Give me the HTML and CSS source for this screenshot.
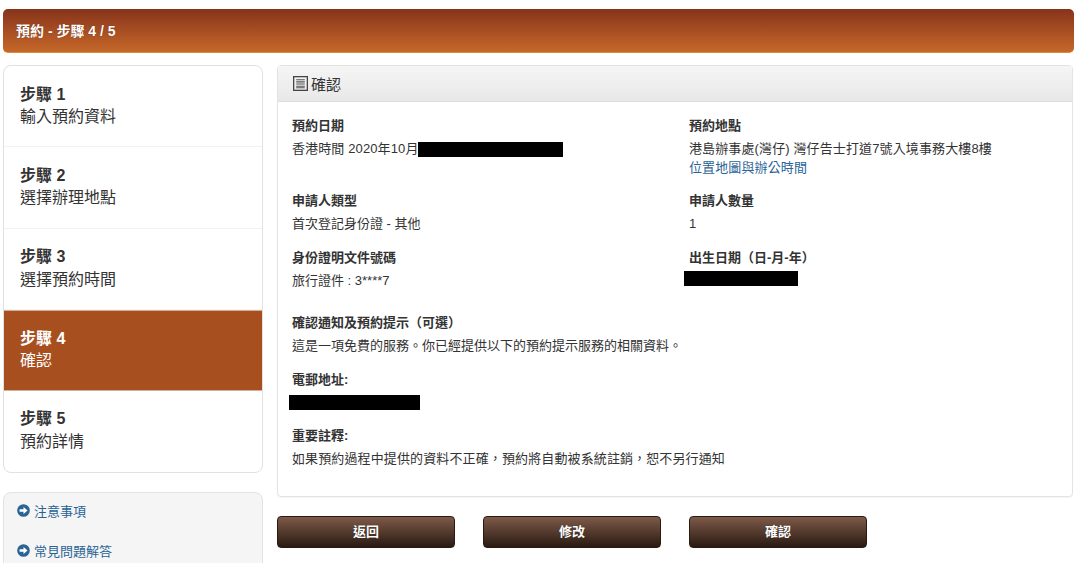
FILE: index.html
```html
<!DOCTYPE html>
<html lang="zh-Hant">
<head>
<meta charset="utf-8">
<title>預約 - 步驟 4 / 5</title>
<link rel="stylesheet" href="styles.css">
</head>
<body>
<header class="title-bar">預約 - 步驟 4 / 5</header>
<div class="layout">
  <aside class="side">
    <ol class="steps">
      <li class="step"><b>步驟 1</b><span>輸入預約資料</span></li>
      <li class="step"><b>步驟 2</b><span>選擇辦理地點</span></li>
      <li class="step"><b>步驟 3</b><span>選擇預約時間</span></li>
      <li class="step active"><b>步驟 4</b><span>確認</span></li>
      <li class="step"><b>步驟 5</b><span>預約詳情</span></li>
    </ol>
    <nav class="links">
      <a class="help-link" href="#"><svg class="arrow" viewBox="0 0 14 14"><circle cx="7" cy="7" r="6.8" fill="#2a6496"/><path d="M2.8 5.6h4.2V3.2L11.4 7 7 10.8V8.4H2.8z" fill="#fff"/></svg>注意事項</a>
      <a class="help-link" href="#"><svg class="arrow" viewBox="0 0 14 14"><circle cx="7" cy="7" r="6.8" fill="#2a6496"/><path d="M2.8 5.6h4.2V3.2L11.4 7 7 10.8V8.4H2.8z" fill="#fff"/></svg>常見問題解答</a>
    </nav>
  </aside>
  <main class="content">
    <section class="panel">
      <h2 class="panel-head"><svg class="list-icon" viewBox="0 0 14 14"><rect x=".6" y=".6" width="12.8" height="12.8" fill="none" stroke="#444" stroke-width="1.2"/><path d="M3 3.5h8M3 5.5h8M3 7.5h8M3 9.5h8M3 11h8" stroke="#555" stroke-width="1"/></svg>確認</h2>
      <div class="panel-body">
        <div class="grid">
          <div class="field f1">
            <h3>預約日期</h3>
            <p>香港時間 2020年10月<i class="redact r-date"></i></p>
          </div>
          <div class="field f1">
            <h3>預約地點</h3>
            <p>港島辦事處(灣仔) 灣仔告士打道7號入境事務大樓8樓<a class="map-link" href="#">位置地圖與辦公時間</a></p>
          </div>
          <div class="field f2">
            <h3>申請人類型</h3>
            <p>首次登記身份證 - 其他</p>
          </div>
          <div class="field f2">
            <h3>申請人數量</h3>
            <p>1</p>
          </div>
          <div class="field f3">
            <h3>身份證明文件號碼</h3>
            <p>旅行證件 : 3****7</p>
          </div>
          <div class="field f3">
            <h3>出生日期（日-月-年）</h3>
            <p><i class="redact r-dob"></i></p>
          </div>
        </div>
        <div class="field f4">
          <h3>確認通知及預約提示（可選）</h3>
          <p>這是一項免費的服務。你已經提供以下的預約提示服務的相關資料。</p>
        </div>
        <div class="field f5">
          <h3>電郵地址:</h3>
          <p><i class="redact r-mail"></i></p>
        </div>
        <div class="field f6">
          <h3>重要註釋:</h3>
          <p>如果預約過程中提供的資料不正確，預約將自動被系統註銷，恕不另行通知</p>
        </div>
      </div>
    </section>
    <div class="actions">
      <button class="btn">返回</button>
      <button class="btn">修改</button>
      <button class="btn">確認</button>
    </div>
  </main>
</div>
</body>
</html>
```
FILE: styles.css
```css
* { box-sizing: border-box; }
html, body { margin: 0; height: 563px; overflow: hidden; background: #fff; }
body {
  padding: 9px 6px 0 3px;
  font-family: "Liberation Sans", "Noto Sans CJK TC", sans-serif;
  font-size: 13px;
  color: #333;
}
.title-bar {
  height: 44px;
  padding-left: 13px;
  line-height: 44px;
  font-size: 14px;
  font-weight: bold;
  color: #fff;
  text-shadow: 0 0 1px rgba(60, 20, 0, .6);
  border-radius: 5px;
  border-bottom: 1px solid #d98a3a;
  background: linear-gradient(#86331a, #c7682a);
}
.layout { display: flex; gap: 14px; margin-top: 12px; }
.side { width: 260px; flex: none; }
.steps {
  list-style: none;
  margin: 0;
  padding: 0;
  height: 408px;
  border: 1px solid #e1e1e1;
  border-radius: 8px;
  overflow: hidden;
}
.step {
  height: 81.4px;
  padding: 17.5px 16px 0;
  font-size: 16px;
  line-height: 22.5px;
  border-bottom: 1px solid #f2f2f2;
}
.step:last-child { border-bottom: 0; }
.step b, .step span { display: block; }
.step.active {
  height: 80.4px;
  padding-top: 16.5px;
  background: #a84f20;
  color: #fff;
  border-color: #d3b09c;
  border-top: 1px solid #d3b09c;
}
.links {
  margin-top: 19px;
  height: 120px;
  padding: 7px 13px;
  border: 1px solid #e3e3e3;
  border-radius: 8px;
  background: #f5f5f5;
}
.help-link {
  display: flex;
  align-items: center;
  gap: 4px;
  height: 20px;
  margin-bottom: 20px;
  color: #2a6496;
  text-decoration: none;
}
.arrow { width: 13px; height: 13px; flex: none; }
.content { width: 796px; flex: none; }
.panel {
  height: 432px;
  border: 1px solid #e3e3e3;
  border-radius: 4px;
  box-shadow: 0 1px 1px rgba(0, 0, 0, .05);
}
.panel-head {
  display: flex;
  align-items: center;
  gap: 3px;
  height: 36px;
  margin: 0;
  padding-left: 15px;
  font-size: 15px;
  font-weight: normal;
  border-bottom: 1px solid #ddd;
  background: linear-gradient(#f5f5f5, #e8e8e8);
}
.list-icon { width: 15px; height: 15px; flex: none; }
.panel-body { padding: 16px 14px 0; }
.grid { display: grid; grid-template-columns: 397px 1fr; }
.field h3 { margin: 0 0 7px; font-size: 13px; line-height: 16px; font-weight: bold; }
.field p { margin: 0; line-height: 16px; }
.map-link { display: block; margin-top: 3px; color: #2a6496; text-decoration: none; }
.f1 { height: 75px; }
.f1 p, .f6 p { letter-spacing: .12px; }
.f2 { height: 57px; }
.f3 { height: 65px; }
.f4 { height: 57px; }
.f5 { height: 56px; }
.redact { display: inline-block; background: #000; vertical-align: top; }
.r-date { width: 145px; height: 15px; margin: 1px 0 0 -1px; }
.r-dob { width: 114px; height: 15px; margin: -2px 0 0 -5px; }
.r-mail { width: 131px; height: 15px; margin: 0 0 0 -3px; }
.actions { display: flex; gap: 28px; margin-top: 19px; }
.btn {
  width: 178px;
  height: 32px;
  padding: 0 0 3px;
  font: bold 13px "Liberation Sans", "Noto Sans CJK TC", sans-serif;
  color: #fff;
  border: 1px solid #2a1a12;
  border-radius: 4px;
  background: linear-gradient(#7d5a49, #2a1a12);
  text-shadow: 0 0 1px rgba(0, 0, 0, .6);
}
```
